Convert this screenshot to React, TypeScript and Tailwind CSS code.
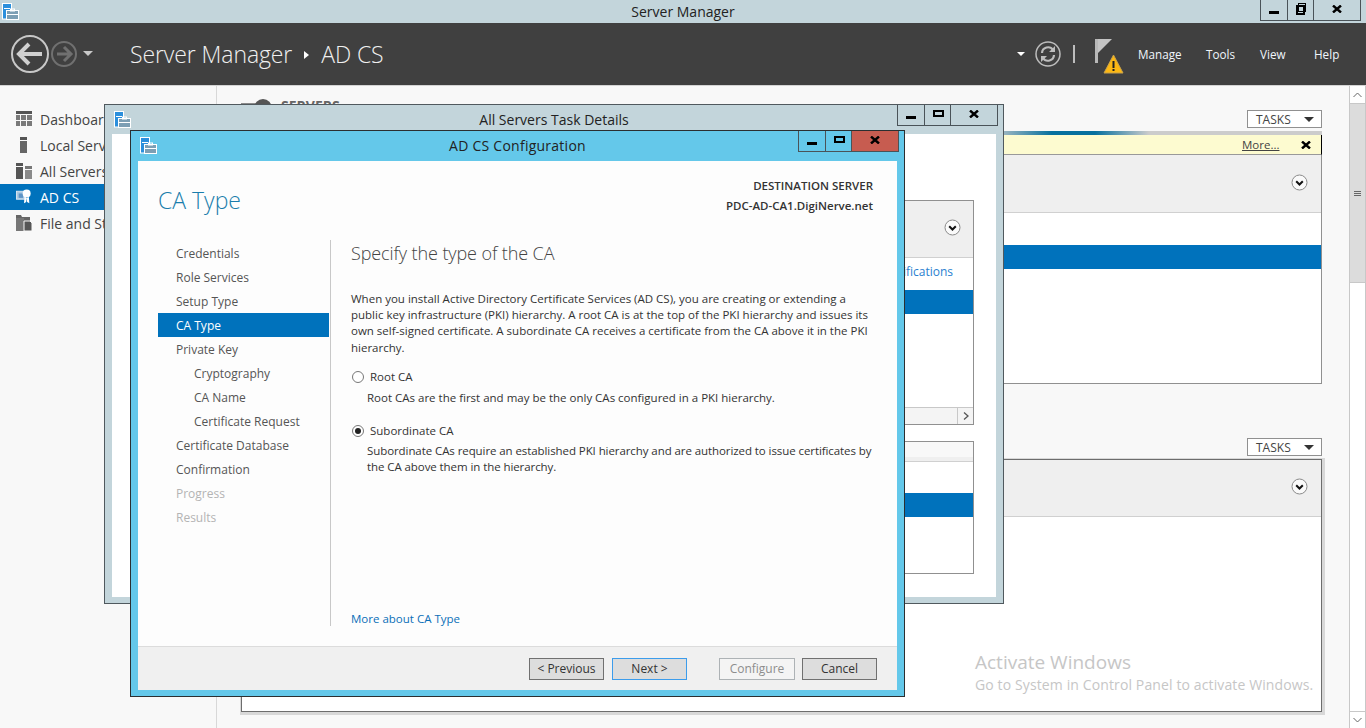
const serverNav = [
  { label: "Dashboard", icon: <DashboardIcon /> },
  { label: "Local Server", icon: <LocalIcon /> },
  { label: "All Servers", icon: <AllServersIcon /> },
  { label: "AD CS", icon: <AdcsIcon />, active: true },
  { label: "File and Storage Services", icon: <FileIcon /> },
];

const wizardSteps = [
  { label: "Credentials" },
  { label: "Role Services" },
  { label: "Setup Type" },
  { label: "CA Type", active: true },
  { label: "Private Key" },
  { label: "Cryptography", sub: true },
  { label: "CA Name", sub: true },
  { label: "Certificate Request", sub: true },
  { label: "Certificate Database" },
  { label: "Confirmation" },
  { label: "Progress", disabled: true },
  { label: "Results", disabled: true },
];

function AppIcon({ className }: { className: string }) {
  return (
    <svg className={className} width="17" height="17" viewBox="0 0 17 17">
      <rect x="0.5" y="0.5" width="9" height="15.5" fill="#2b8fdc" stroke="#fff" />
      <rect x="2" y="5" width="6" height="1" fill="#fff" />
      <rect x="4.5" y="7.5" width="12" height="9" fill="#7d9fb4" stroke="#fff" />
      <rect x="8.5" y="6" width="4" height="2" fill="none" stroke="#fff" />
      <rect x="5" y="11" width="11" height="1" fill="#fff" />
    </svg>
  );
}

function DashboardIcon() {
  return (
    <svg width="16" height="16" viewBox="0 0 16 16" fill="#7a7a7a">
      <rect x="0" y="0" width="16" height="3" fill="#555" />
      <rect x="0" y="4" width="4" height="5" />
      <rect x="5" y="4" width="5" height="5" />
      <rect x="11" y="4" width="5" height="5" />
      <rect x="0" y="10" width="4" height="5" />
      <rect x="5" y="10" width="5" height="5" />
      <rect x="11" y="10" width="5" height="5" />
    </svg>
  );
}

function LocalIcon() {
  return (
    <svg width="16" height="16" viewBox="0 0 16 16">
      <rect x="4" y="0" width="7" height="3" fill="#555" />
      <rect x="4" y="4" width="7" height="12" fill="#666" />
    </svg>
  );
}

function AllServersIcon() {
  return (
    <svg width="16" height="16" viewBox="0 0 16 16">
      <rect x="0" y="0" width="7" height="3" fill="#555" />
      <rect x="0" y="4" width="7" height="12" fill="#555" />
      <rect x="9" y="3" width="7" height="3" fill="#777" />
      <rect x="9" y="7" width="7" height="9" fill="#8a8a8a" />
    </svg>
  );
}

function AdcsIcon() {
  return (
    <svg width="18" height="18" viewBox="0 0 18 18">
      <rect x="0.5" y="2.5" width="10" height="9" fill="#a9c8e2" stroke="#dfe9f2" />
      <rect x="3" y="5" width="5" height="5" fill="#5f95c6" />
      <circle cx="12" cy="5" r="4.5" fill="#fff" />
      <path d="M9.5 9 L9 16 L11.5 14.5 L12 10 Z M14.5 9 L15 16 L12.5 14.5 L12 10 Z" fill="#fff" />
    </svg>
  );
}

function FileIcon() {
  return (
    <svg width="16" height="16" viewBox="0 0 16 16">
      <path d="M0 0H5L6 2H14V6H0Z" fill="#666" />
      <rect x="0" y="3" width="8" height="13" fill="#777" />
      <path d="M8 6H14L16 8V16H8Z" fill="#555" stroke="#f8f8f8" />
    </svg>
  );
}

function ChevronCircle() {
  return (
    <svg width="17" height="17" viewBox="0 0 17 17">
      <circle cx="8.5" cy="8.5" r="7.5" fill="#fafafa" stroke="#8a8a8a" />
      <path d="M5.2 7.2 L8.5 10.5 L11.8 7.2" fill="none" stroke="#111" strokeWidth="2" />
    </svg>
  );
}

function CloseGlyph() {
  return (
    <svg width="10" height="8" viewBox="0 0 10 8">
      <path d="M1 0.5 L9 7.5 M9 0.5 L1 7.5" stroke="#000" strokeWidth="2.4" />
    </svg>
  );
}

function WindowButtons({ closeBg, restore }: { closeBg?: string; restore?: boolean }) {
  return (
    <div className="absolute top-0 right-[5px] flex h-[21px] border border-t-0 border-[#4a5358]">
      <div className="flex w-[27px] items-end justify-center border-r border-[#4a5358] pb-[6px]">
        <div className="h-[3px] w-[10px] bg-black" />
      </div>
      <div className="flex w-[26px] items-center justify-center border-r border-[#4a5358] pb-[3px] pl-[1px]">
        {restore ? (
          <svg width="10" height="12" viewBox="0 0 10 12">
            <rect x="2.5" y="0.5" width="7" height="8" fill="none" stroke="#000" />
            <rect x="1" y="3" width="7" height="8" fill="none" stroke="#000" strokeWidth="2" />
          </svg>
        ) : (
          <div className="h-[7px] w-[11px] border-2 border-black" />
        )}
      </div>
      <div className={`flex w-[46px] items-center justify-center pb-[3px] ${closeBg ?? ""}`}>
        <CloseGlyph />
      </div>
    </div>
  );
}

function TasksButton() {
  return (
    <div className="flex h-[18px] w-[75px] items-center justify-between border border-[#909090] bg-white pl-[8px] pr-[7px] pt-[1px] text-[12px] text-[#444]">
      <span>TASKS</span>
      <span className="h-0 w-0 border-x-[5px] border-t-[5px] border-x-transparent border-t-[#333]" />
    </div>
  );
}

function WizardButton({
  label,
  focus,
  disabled,
  className,
}: {
  label: string;
  focus?: boolean;
  disabled?: boolean;
  className?: string;
}) {
  let style = "border-[#707070] bg-[#dddddd] text-[#333]";
  if (focus) style = "border-[#3c9ceb] bg-[#dddddd] text-[#333]";
  if (disabled) style = "border-[#adb2b5] bg-[#f4f4f4] text-[#8d8d8d]";
  return (
    <div className={`flex h-[22px] items-center justify-center border text-[12px] ${style} ${className ?? ""}`}>
      {label}
    </div>
  );
}

function AllServersWindow() {
  return (
    <div className="absolute top-[104px] left-[104px] flex h-[500px] w-[900px] flex-col border border-[#50595e] bg-[#c3d5db] px-[7px] pb-[6px]">
      <AppIcon className="absolute top-[6px] left-[9px]" />
      <WindowButtons />
      <div className="flex h-[29px] shrink-0 items-center justify-center text-[14px] text-[#222]">All Servers Task Details</div>
      <div className="flex-1 bg-white pt-[66px] pr-[22px] pl-[28px]">
        <div className="flex h-[225px] flex-col border border-[#909090] bg-white">
          <div className="flex h-[57px] shrink-0 items-center justify-end border-b border-[#d0d0d0] bg-[#efefef] pr-[12px] pb-[3px]">
            <ChevronCircle />
          </div>
          <div className="flex h-[32px] shrink-0 items-center justify-end pr-[20px] pb-[4px] text-[12px] text-[#2a7fd0]">Notifications</div>
          <div className="h-[24px] shrink-0 bg-[#0072bc]" />
          <div className="flex-1" />
          <div className="flex h-[17px] shrink-0 justify-end border-t border-[#c8c8c8] bg-[#f4f4f4]">
            <div className="flex w-[16px] items-center justify-center border-l border-[#c8c8c8]">
              <svg width="6" height="8" viewBox="0 0 6 8">
                <path d="M1 0.5 L5 4 L1 7.5" fill="none" stroke="#555" strokeWidth="1.3" />
              </svg>
            </div>
          </div>
        </div>
        <div className="mt-[16px] h-[133px] border border-[#909090]">
          <div className="h-[15px] bg-[#f8f8f8]" />
          <div className="h-[5px] border-b border-[#d0d0d0] bg-[#efefef]" />
          <div className="mt-[31px] h-[24px] bg-[#0072bc]" />
        </div>
      </div>
    </div>
  );
}

function ConfigurationWindow() {
  return (
    <div className="absolute top-[130px] left-[130px] flex h-[567px] w-[775px] flex-col border border-[#2b2f31] bg-[#64c8ea] px-[7px] pb-[6px]">
      <AppIcon className="absolute top-[6px] left-[9px]" />
      <WindowButtons closeBg="bg-[#c75c50]" />
      <div className="flex h-[30px] shrink-0 items-center justify-center pb-[2px] text-[14px] tracking-[0.25px] text-[#222]">AD CS Configuration</div>
      <div className="flex flex-1 flex-col bg-[#fdfdfd]">
        <div className="flex h-[79px] shrink-0 justify-between pr-[24px] pl-[20px]">
          <div className="pt-[21px] text-[23px] leading-[36px] font-light text-[#1a7dac]">CA Type</div>
          <div className="pt-[15px] text-right text-[11.5px] leading-[20px] font-semibold text-[#333]">
            <div>DESTINATION SERVER</div>
            <div>PDC-AD-CA1.DigiNerve.net</div>
          </div>
        </div>
        <div className="flex flex-1 pl-[20px]">
          <div className="mb-[20px] w-[173px] shrink-0 border-r border-[#c8c8c8] pt-[1px] text-[12px]">
            {wizardSteps.map((step) => (
              <div
                key={step.label}
                className={`flex h-[24px] items-center pt-[1px] ${step.sub ? "pl-[36px]" : "pl-[18px]"} ${
                  step.active ? "mr-px bg-[#0072bc] text-white" : step.disabled ? "text-[#b4b4b4]" : "text-[#555]"
                }`}
              >
                {step.label}
              </div>
            ))}
          </div>
          <div className="flex flex-1 flex-col pr-[24px] pl-[20px] text-[11.5px] text-[#333]">
            <div className="h-[26px] text-[18px] leading-[26px] font-light tracking-[-0.1px] text-[#444]">Specify the type of the CA</div>
            <p className="mt-[25px] leading-[16.2px]">
              When you install Active Directory Certificate Services (AD CS), you are creating or extending a public key infrastructure (PKI) hierarchy. A root CA is at the top of the PKI hierarchy and issues its own self-signed certificate. A subordinate CA receives a certificate from the CA above it in the PKI hierarchy.
            </p>
            <label className="mt-[12px] flex h-[18px] items-center gap-[6px] pl-[1px]">
              <span className="h-[12px] w-[12px] rounded-full border border-[#777] bg-white" />
              <span>Root CA</span>
            </label>
            <p className="mt-[4px] pl-[16px] leading-[16px]">Root CAs are the first and may be the only CAs configured in a PKI hierarchy.</p>
            <label className="mt-[16px] flex h-[18px] items-center gap-[6px] pl-[1px]">
              <span className="flex h-[12px] w-[12px] items-center justify-center rounded-full border border-[#777] bg-white">
                <span className="h-[6px] w-[6px] rounded-full bg-[#222]" />
              </span>
              <span>Subordinate CA</span>
            </label>
            <p className="mt-[3px] -mr-[8px] pl-[16px] leading-[16px] tracking-[-0.08px]">
              Subordinate CAs require an established PKI hierarchy and are authorized to issue certificates by the CA above them in the hierarchy.
            </p>
            <div className="mt-auto mb-[19px] leading-[16px] text-[#0b6fb8]">More about CA Type</div>
          </div>
        </div>
        <div className="flex h-[44px] shrink-0 items-center justify-end border-t border-[#dcdcdc] bg-[#f0f0f0] pr-[20px]">
          <WizardButton label="< Previous" className="w-[75px]" />
          <WizardButton label="Next >" focus className="ml-[8px] w-[75px]" />
          <WizardButton label="Configure" disabled className="ml-[32px] w-[76px]" />
          <WizardButton label="Cancel" className="ml-[7px] w-[75px]" />
        </div>
      </div>
    </div>
  );
}

export default function App() {
  return (
    <div className="relative h-[728px] w-[1366px] overflow-hidden bg-[#f8f8f8] font-['Open_Sans',sans-serif]">
      <div className="relative flex h-[23px] items-center justify-center bg-[#c3d5db] text-[14px] text-[#222]">
        <AppIcon className="absolute top-[3px] left-[2px]" />
        Server Manager
        <WindowButtons restore />
      </div>

      <div className="flex h-[63px] items-center border-b border-[#d4d4d4] bg-[#404040] text-white">
        <svg className="ml-[11px]" width="86" height="40" viewBox="0 0 86 40">
          <circle cx="19" cy="20" r="18" fill="none" stroke="#c8c8c8" strokeWidth="2" />
          <path d="M18 10 L8 20 L18 30 M9 20 H31" fill="none" stroke="#d0d0d0" strokeWidth="4" />
          <circle cx="53" cy="20" r="12" fill="none" stroke="#707070" strokeWidth="2" />
          <path d="M53 13 L60 20 L53 27 M59 20 H46" fill="none" stroke="#707070" strokeWidth="3" />
          <path d="M72 17 H82 L77 22 Z" fill="#c8c8c8" />
        </svg>
        <div className="ml-[33px] flex items-center pt-[1px] text-[23px] font-light tracking-[-0.1px] text-[#f0f0f0]">
          <span>Server Manager</span>
          <span className="mx-[12px] h-0 w-0 border-y-[4px] border-l-[5px] border-y-transparent border-l-white" />
          <span>AD CS</span>
        </div>
        <div className="ml-auto flex items-center">
          <span className="h-0 w-0 border-x-[4px] border-t-[4px] border-x-transparent border-t-white" />
          <svg className="ml-[9px]" width="28" height="28" viewBox="0 0 28 28">
            <circle cx="14" cy="14" r="12" fill="none" stroke="#bdbdbd" strokeWidth="1.5" />
            <path d="M8 13 A6 6 0 0 1 19 10 M20 15 A6 6 0 0 1 9 18" fill="none" stroke="#bdbdbd" strokeWidth="2.2" />
            <path d="M21 6 V12 H15 Z M7 22 V16 H13 Z" fill="#bdbdbd" />
          </svg>
          <div className="ml-[11px] h-[18px] w-[2px] bg-[#bdbdbd]" />
          <svg className="mt-[6px] ml-[20px]" width="30" height="36" viewBox="0 0 30 36">
            <rect x="0" y="0" width="3" height="24" fill="#b8b8b8" />
            <path d="M3 0 H17 L3 14 Z" fill="#c4c4c4" />
            <path d="M18.5 16 L28 34 H9 Z" fill="#fdb813" stroke="#c9a24a" />
            <rect x="17.5" y="22" width="2" height="7" fill="#222" />
            <rect x="17.5" y="30" width="2" height="2" fill="#222" />
          </svg>
          <div className="ml-[13px] flex pt-[2px] text-[11.7px] text-[#f0f6fc]">
            <span className="w-[68px]">Manage</span>
            <span className="w-[54px]">Tools</span>
            <span className="w-[54px]">View</span>
            <span className="w-[40px]">Help</span>
          </div>
          <div className="w-[12px]" />
        </div>
      </div>

      <div className="flex h-[642px]">
        <div className="w-[217px] shrink-0 border-r border-[#d8d8d8] pt-[20px] text-[14px] text-[#444]">
          {serverNav.map((item) => (
            <div
              key={item.label}
              className={`flex h-[26px] items-center gap-[8px] whitespace-nowrap pl-[16px] ${item.active ? "bg-[#0072bc] text-white" : ""}`}
            >
              <span className="flex w-[16px] justify-center">{item.icon}</span>
              {item.label}
            </div>
          ))}
        </div>

        <div className="flex-1 pt-[9px] pr-[27px] pl-[24px]">
          <div className="flex items-start justify-between">
            <div className="flex items-center gap-[8px]">
              <svg width="32" height="18" viewBox="0 0 32 18">
                <rect x="0" y="4" width="16" height="12" fill="#8a8a8a" />
                <circle cx="22" cy="9" r="9" fill="#555" />
              </svg>
              <span className="pb-[4px] text-[14px] font-bold text-[#666]">SERVERS</span>
            </div>
            <div className="mt-[15px]">
              <TasksButton />
            </div>
          </div>
          <div className="mt-[3px] h-[4px] bg-[linear-gradient(90deg,#ccc_69%,#06709e_75%,#06709e_79%,#ccc_84%)]" />
          <div className="flex h-[20px] items-center justify-between border-r border-b border-r-black border-b-[#999] bg-[#fdfbd0] pr-[10px] pl-[1001px] text-[11.5px] text-[#444]">
            <span className="underline">More...</span>
            <CloseGlyph />
          </div>
          <div className="h-[229px] border-x border-b border-[#909090] bg-white">
            <div className="flex h-[58px] items-center justify-end border-b border-[#d0d0d0] bg-[#efefef] pr-[13px] pb-[3px]">
              <ChevronCircle />
            </div>
            <div className="mt-[32px] h-[24px] bg-[#0072bc]" />
          </div>
          <div className="mt-[54px] flex justify-end">
            <TasksButton />
          </div>
          <div className="mt-[3px] h-[253px] border border-[#6d6d6d] bg-white shadow-[1px_1px_0_2px_#d8d8d8]">
            <div className="flex h-[57px] items-center justify-end border-b border-[#d0d0d0] bg-[#efefef] pr-[13px] pb-[4px]">
              <ChevronCircle />
            </div>
          </div>
        </div>

        <div className="flex w-[17px] shrink-0 flex-col border-x border-[#c8c8c8] bg-white">
          <div className="flex h-[17px] items-center justify-center">
            <svg width="9" height="6" viewBox="0 0 9 6">
              <path d="M0.5 5 L4.5 1 L8.5 5" fill="none" stroke="#666" />
            </svg>
          </div>
          <div className="flex h-[180px] flex-col items-center justify-center gap-px border-y border-[#c8c8c8] bg-[#dcdcdc]">
            <div className="h-px w-[7px] bg-[#666]" />
            <div className="h-px w-[7px] bg-[#666]" />
            <div className="h-px w-[7px] bg-[#666]" />
          </div>
          <div className="flex-1" />
          <div className="flex h-[17px] items-center justify-center border-t border-[#c8c8c8]">
            <svg width="9" height="6" viewBox="0 0 9 6">
              <path d="M0.5 1 L4.5 5 L8.5 1" fill="none" stroke="#666" />
            </svg>
          </div>
        </div>
      </div>

      <AllServersWindow />
      <ConfigurationWindow />

      <div className="pointer-events-none absolute top-[650px] left-[975px] text-[#c6c6c6]">
        <div className="text-[19px] leading-[24px]">Activate Windows</div>
        <div className="mt-[1px] text-[14px] leading-[20px] tracking-[0.12px]">Go to System in Control Panel to activate Windows.</div>
      </div>
    </div>
  );
}
